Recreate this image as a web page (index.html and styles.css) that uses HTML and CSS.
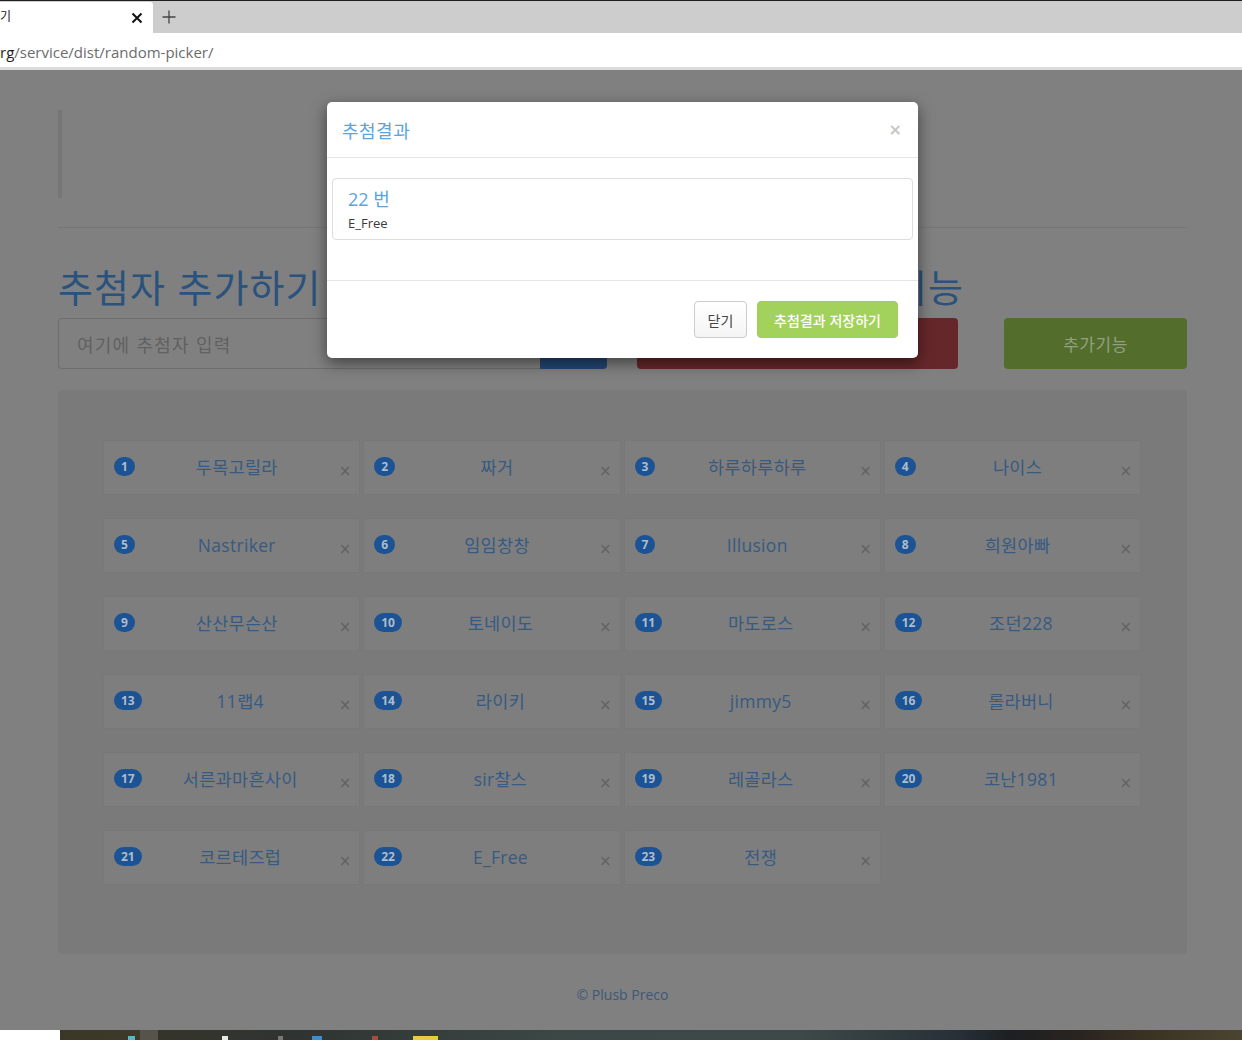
FILE: index.html
```html
<!DOCTYPE html>
<html lang="ko">
<head>
<meta charset="utf-8">
<title>랜덤 추첨기</title>
<link rel="stylesheet" href="styles.css">
</head>
<body>
<div class="window">
  <div class="tabbar">
    <div class="tab">
      <span class="tab-title">기</span>
      <svg class="tab-close" width="12" height="12" viewBox="0 0 12 12"><path d="M1.5 1.5 L10.5 10.5 M10.5 1.5 L1.5 10.5" stroke="#111" stroke-width="2" fill="none"/></svg>
    </div>
    <svg class="tab-new" width="14" height="14" viewBox="0 0 14 14"><path d="M7 0.5 V13.5 M0.5 7 H13.5" stroke="#444" stroke-width="1.3" fill="none"/></svg>
  </div>
  <div class="addressbar"><span class="url-host">rg</span><span class="url-path">/service/dist/random-picker/</span></div>

  <div class="viewport">
    <div class="page">
      <blockquote class="intro"></blockquote>
      <hr class="divider">
      <div class="heading-row">
        <h1 class="heading">추첨자 추가하기</h1>
        <h1 class="heading heading-right">추첨 기능</h1>
      </div>
      <div class="control-row">
        <div class="input-group">
          <input class="name-input" type="text" placeholder="여기에 추첨자 입력">
          <button class="btn-add" type="button" aria-label="추가"></button>
        </div>
        <button class="btn-draw" type="button" aria-label="추첨하기"></button>
        <button class="btn-extra" type="button">추가기능</button>
      </div>

      <div class="panel">
        <div class="cards">
          <div class="card"><span class="badge">1</span><span class="name">두목고릴라</span><span class="remove">×</span></div>
          <div class="card"><span class="badge">2</span><span class="name">짜거</span><span class="remove">×</span></div>
          <div class="card"><span class="badge">3</span><span class="name">하루하루하루</span><span class="remove">×</span></div>
          <div class="card"><span class="badge">4</span><span class="name">나이스</span><span class="remove">×</span></div>
          <div class="card"><span class="badge">5</span><span class="name">Nastriker</span><span class="remove">×</span></div>
          <div class="card"><span class="badge">6</span><span class="name">임임창창</span><span class="remove">×</span></div>
          <div class="card"><span class="badge">7</span><span class="name">Illusion</span><span class="remove">×</span></div>
          <div class="card"><span class="badge">8</span><span class="name">희원아빠</span><span class="remove">×</span></div>
          <div class="card"><span class="badge">9</span><span class="name">산산무슨산</span><span class="remove">×</span></div>
          <div class="card"><span class="badge">10</span><span class="name">토네이도</span><span class="remove">×</span></div>
          <div class="card"><span class="badge">11</span><span class="name">마도로스</span><span class="remove">×</span></div>
          <div class="card"><span class="badge">12</span><span class="name">조던228</span><span class="remove">×</span></div>
          <div class="card"><span class="badge">13</span><span class="name">11랩4</span><span class="remove">×</span></div>
          <div class="card"><span class="badge">14</span><span class="name">라이키</span><span class="remove">×</span></div>
          <div class="card"><span class="badge">15</span><span class="name">jimmy5</span><span class="remove">×</span></div>
          <div class="card"><span class="badge">16</span><span class="name">롤라버니</span><span class="remove">×</span></div>
          <div class="card"><span class="badge">17</span><span class="name">서른과마흔사이</span><span class="remove">×</span></div>
          <div class="card"><span class="badge">18</span><span class="name">sir찰스</span><span class="remove">×</span></div>
          <div class="card"><span class="badge">19</span><span class="name">레골라스</span><span class="remove">×</span></div>
          <div class="card"><span class="badge">20</span><span class="name">코난1981</span><span class="remove">×</span></div>
          <div class="card"><span class="badge">21</span><span class="name">코르테즈럽</span><span class="remove">×</span></div>
          <div class="card"><span class="badge">22</span><span class="name">E_Free</span><span class="remove">×</span></div>
          <div class="card"><span class="badge">23</span><span class="name">전쟁</span><span class="remove">×</span></div>
        </div>
      </div>

      <footer class="footer">© Plusb Preco</footer>
    </div>

    <div class="modal">
      <div class="modal-header">
        <h4 class="modal-title">추첨결과</h4>
        <span class="modal-close">×</span>
      </div>
      <div class="modal-body">
        <div class="result-item">
          <div class="result-num">22 번</div>
          <div class="result-name">E_Free</div>
        </div>
      </div>
      <div class="modal-footer">
        <button class="btn-close" type="button">닫기</button>
        <button class="btn-save" type="button">추첨결과 저장하기</button>
      </div>
    </div>
  </div>

  <div class="taskbar">
    <span class="tb-icon tb-teal"></span>
    <span class="tb-icon tb-white"></span>
    <span class="tb-icon tb-gray"></span>
    <span class="tb-icon tb-blue"></span>
    <span class="tb-icon tb-red"></span>
    <span class="tb-icon tb-yellow"></span>
  </div>
</div>
</body>
</html>
```

FILE: styles.css
```css
* { box-sizing: border-box; }

html, body {
  margin: 0;
  padding: 0;
}

body {
  width: 1242px;
  height: 1040px;
  overflow: hidden;
  background: #808080;
  font-family: "Open Sans", "Noto Sans CJK KR", sans-serif;
}

.window {
  display: flex;
  flex-direction: column;
  height: 1040px;
}

/* ---------- browser chrome ---------- */
.tabbar {
  height: 33px;
  flex: 0 0 33px;
  background: #cdcdcd;
  border-top: 1px solid #1e1e1e;
  display: flex;
  align-items: flex-end;
}

.tab {
  width: 153px;
  height: 31px;
  background: #ffffff;
  border-top-right-radius: 3px;
  display: flex;
  align-items: center;
  justify-content: space-between;
  padding-right: 10px;
}

.tab-title {
  font-family: "Noto Sans CJK KR", sans-serif;
  font-size: 12px;
  color: #222;
  margin-left: 0;
  margin-top: -4px;
}

.tab-close { display: block; }

.tab-new {
  display: block;
  margin-left: 9px;
  margin-bottom: 9px;
}

.addressbar {
  height: 37px;
  flex: 0 0 37px;
  background: #ffffff;
  border-bottom: 3px solid #dcdcdc;
  padding-top: 9px;
  font-family: "Open Sans", sans-serif;
  font-size: 15px;
  line-height: 20px;
  white-space: nowrap;
}

.url-host { color: #1e1e1e; }
.url-path { color: #6c6c6c; }

.viewport {
  position: relative;
  flex: 0 0 960px;
  height: 960px;
  overflow: hidden;
  background: #808080;
}

.taskbar {
  flex: 0 0 10px;
  height: 10px;
  display: flex;
  align-items: flex-start;
  background: linear-gradient(90deg,
    #ffffff 0, #ffffff 60px,
    #3a3726 60px, #3e3a2b 140px,
    #57534a 140px, #57534a 158px,
    #35342a 158px, #2f3432 300px,
    #3b4846 560px, #3d4949 800px,
    #263036 960px, #1d1f22 1010px,
    #2a2420 1080px, #3b3322 1150px,
    #4a4430 1242px);
}

.tb-icon {
  display: block;
  height: 4px;
  margin-top: 6px;
}
.tb-teal   { width: 7px;  margin-left: 128px; background: #53b9c4; }
.tb-white  { width: 6px;  margin-left: 87px;  background: #e8e8e8; }
.tb-gray   { width: 5px;  margin-left: 50px;  background: #777; }
.tb-blue   { width: 10px; margin-left: 29px;  background: #3a8fd0; }
.tb-red    { width: 6px;  margin-left: 50px;  background: #a84b3c; }
.tb-yellow { width: 25px; margin-left: 35px;  background: #e6cd3e; }

/* ---------- page (dimmed by the modal backdrop) ---------- */
.page {
  width: 1187px;
  padding-left: 58px;
  padding-top: 40px;
}

.intro {
  margin: 0;
  height: 88px;
  border-left: 4px solid #767676;
}

.divider {
  margin: 29px 0 0 0;
  border: 0;
  height: 1px;
  background: #767676;
}

.heading-row {
  display: grid;
  grid-template-columns: 549px 321px;
  column-gap: 30px;
  margin-top: 40px;
}

.heading {
  margin: 0;
  font-family: "Noto Sans CJK KR", sans-serif;
  font-weight: 400;
  font-size: 38px;
  letter-spacing: 1px;
  line-height: 36px;
  color: #2a527c;
  white-space: nowrap;
}

.heading-right {
  text-align: right;
  margin-right: -6px;
}

.control-row {
  display: flex;
  margin-top: 14px;
  height: 51px;
}

.input-group {
  display: flex;
  width: 549px;
  height: 51px;
}

.name-input {
  width: 482px;
  height: 51px;
  margin: 0;
  padding: 0 18px;
  border: 1px solid #6d6d6d;
  border-right: 0;
  border-radius: 4px 0 0 4px;
  background: #808080;
  font-family: "Noto Sans CJK KR", sans-serif;
  font-size: 18px;
  letter-spacing: 1.2px;
  color: #333;
  outline: none;
}

.name-input::placeholder { color: #616161; }

.btn-add,
.btn-draw,
.btn-extra {
  margin: 0;
  border: 0;
  font-family: "Noto Sans CJK KR", sans-serif;
  font-size: 17px;
  height: 51px;
}

.btn-add {
  width: 67px;
  border-radius: 0 4px 4px 0;
  background: #224774;
}

.btn-draw {
  width: 321px;
  margin-left: 30px;
  border-radius: 4px;
  background: #66272b;
}

.btn-extra {
  width: 183px;
  margin-left: 46px;
  border-radius: 4px;
  background: #536e2c;
  color: #93a083;
  letter-spacing: 0.5px;
}

.panel {
  width: 1129px;
  margin-top: 21px;
  padding: 50px 46px 69px 45px;
  background: #7a7a7a;
  border-radius: 4px;
}

.cards {
  display: grid;
  grid-template-columns: repeat(4, 1fr);
  column-gap: 3px;
  row-gap: 23px;
}

.card {
  height: 55px;
  display: flex;
  align-items: center;
  padding: 0 8px 0 10px;
  background: #7e7e7e;
  border: 1px solid #787878;
}

.badge {
  display: inline-block;
  min-width: 10px;
  padding: 3px 7px;
  font-family: "Open Sans", sans-serif;
  font-size: 12px;
  font-weight: 700;
  line-height: 13px;
  color: #aebccc;
  background: #1b5394;
  border-radius: 10px;
  text-align: center;
  margin-top: -2px;
}

.name {
  flex: 1;
  text-align: center;
  font-size: 17.5px;
  letter-spacing: 0.3px;
  line-height: 24px;
  color: #365a82;
  white-space: nowrap;
  margin-top: -2px;
}

.remove {
  font-family: "DejaVu Sans", sans-serif;
  font-size: 15px;
  line-height: 16px;
  color: #616161;
  margin-top: 7px;
}

.footer {
  margin-top: 31px;
  text-align: center;
  font-size: 14px;
  line-height: 20px;
  color: #3d587a;
  width: 1129px;
}

/* ---------- modal ---------- */
.modal {
  position: absolute;
  top: 32px;
  left: 327px;
  width: 591px;
  background: #ffffff;
  border-radius: 5px;
  box-shadow: 0 5px 15px rgba(0, 0, 0, 0.5);
  font-family: "Open Sans", "Noto Sans CJK KR", sans-serif;
}

.modal-header {
  height: 56px;
  display: flex;
  align-items: center;
  justify-content: space-between;
  padding: 0 16px 0 15px;
  border-bottom: 1px solid #e5e5e5;
}

.modal-title {
  margin: 0;
  font-family: "Noto Sans CJK KR", sans-serif;
  font-size: 18px;
  letter-spacing: 0.5px;
  font-weight: 400;
  color: #5aa5e0;
}

.modal-close {
  font-family: "DejaVu Sans", sans-serif;
  font-size: 16px;
  color: #c6c6c6;
  font-weight: 700;
}

.modal-body {
  padding: 20px 5px 40px;
}

.result-item {
  border: 1px solid #dddddd;
  border-radius: 4px;
  padding: 7px 15px;
}

.result-num {
  font-size: 18px;
  line-height: 26px;
  color: #5aa5e0;
}

.result-name {
  margin-top: 2px;
  font-size: 13px;
  line-height: 18px;
  color: #3a3a3a;
}

.modal-footer {
  display: flex;
  justify-content: flex-end;
  gap: 10px;
  padding: 20px 20px 20px;
  border-top: 1px solid #e5e5e5;
}

.btn-close,
.btn-save {
  margin: 0;
  height: 37px;
  font-family: "Noto Sans CJK KR", sans-serif;
  font-size: 14px;
  border-radius: 4px;
}

.btn-close {
  width: 53px;
  padding: 0;
  background: linear-gradient(#ffffff, #f4f4f4);
  border: 1px solid #cccccc;
  color: #444;
}

.btn-save {
  width: 141px;
  padding: 0;
  background: #a3d25c;
  border: 1px solid #a0cf58;
  color: #ffffff;
  font-weight: 500;
}
```
